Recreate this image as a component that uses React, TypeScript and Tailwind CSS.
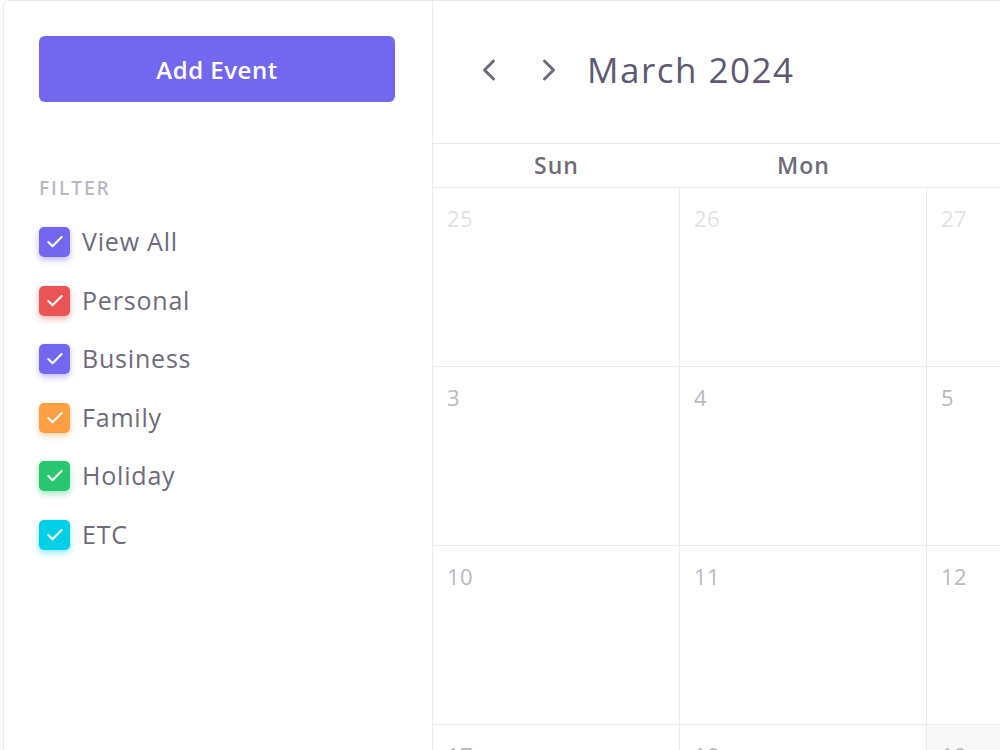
import { Check, ChevronLeft, ChevronRight } from 'lucide-react';

const filters = [
  { label: 'View All', box: 'bg-[#7367f0] shadow-[0_3px_6px_0_rgba(115,103,240,0.45)]' },
  { label: 'Personal', box: 'bg-[#ea5455] shadow-[0_3px_6px_0_rgba(234,84,85,0.45)]' },
  { label: 'Business', box: 'bg-[#7367f0] shadow-[0_3px_6px_0_rgba(115,103,240,0.45)]' },
  { label: 'Family', box: 'bg-[#ff9f43] shadow-[0_3px_6px_0_rgba(255,159,67,0.45)]' },
  { label: 'Holiday', box: 'bg-[#28c76f] shadow-[0_3px_6px_0_rgba(40,199,111,0.45)]' },
  { label: 'ETC', box: 'bg-[#00cfe8] shadow-[0_3px_6px_0_rgba(0,207,232,0.45)]' },
];

// only sun..tue fit in the window
const days = ['Sun', 'Mon', 'Tue'];

const weeks = [
  [25, 26, 27],
  [3, 4, 5],
  [10, 11, 12],
  [17, 18, 19],
];

export default function App() {
  return (
    <div className="w-[1000px] h-[750px] overflow-hidden bg-white pl-[3px] font-['Open_Sans',sans-serif]">
      <div className="flex h-[900px] rounded-tl-md border-l border-t border-[#ebe9f1]">
        <aside className="w-[429px] shrink-0 border-r border-[#ebe9f1] px-[35px] pt-[35px]">
          <button className="w-[356px] h-[66px] rounded-[6px] bg-[#7367f0] text-white text-[24px] font-semibold tracking-[0.5px] pt-[2px]">
            Add Event
          </button>

          <div className="mt-[77px] text-[19px] font-semibold tracking-[2px] text-[#b9b9c3] leading-none">FILTER</div>

          <ul className="mt-[29px] flex flex-col gap-[28.5px]">
            {filters.map((f) => (
              <li key={f.label} className="flex items-center h-[30px]">
                <span className={`w-[31px] h-[30px] rounded-[5px] flex items-center justify-center ${f.box}`}>
                  <Check size={20} strokeWidth={2.5} className="text-white" />
                </span>
                <span className="ml-[12px] text-[25px] tracking-[0.8px] text-[#6e6b7b]">{f.label}</span>
              </li>
            ))}
          </ul>
        </aside>

        <section className="flex-1 min-w-0 overflow-hidden">
          <div className="h-[143px] border-b border-[#ebe9f1] flex items-center pl-[38px] pb-[4px]">
            <button className="text-[#6e6b7b] w-[36px] flex justify-center">
              <ChevronLeft size={36} strokeWidth={2} />
            </button>
            <button className="ml-[24px] text-[#6e6b7b] w-[36px] flex justify-center">
              <ChevronRight size={36} strokeWidth={2} />
            </button>
            <h2 className="ml-[20px] text-[35px] text-[#5e5873] tracking-[1.5px]">March 2024</h2>
          </div>

          <div className="flex h-[44px] border-b border-[#ebe9f1]">
            {days.map((d) => (
              <div key={d} className="w-[247px] shrink-0 flex items-center justify-center text-[23px] font-semibold tracking-[1px] text-[#6e6b7b]">
                {d}
              </div>
            ))}
          </div>

          {weeks.map((week, wi) => (
            <div key={wi} className="flex h-[179px] border-b border-[#ebe9f1]">
              {week.map((n, di) => {
                const faded = wi === 0;
                const today = wi === 3 && di === 2;
                return (
                  <div
                    key={di}
                    className={`w-[247px] shrink-0 border-r border-[#ebe9f1] pl-[14px] pt-[14px] ${today ? 'bg-[#f8f8f8]' : ''}`}
                  >
                    <span className={`text-[22px] tracking-[0.5px] ${faded ? 'text-[#e2e1e7]' : 'text-[#b9b9c3]'}`}>{n}</span>
                  </div>
                );
              })}
            </div>
          ))}
        </section>
      </div>
    </div>
  );
}
